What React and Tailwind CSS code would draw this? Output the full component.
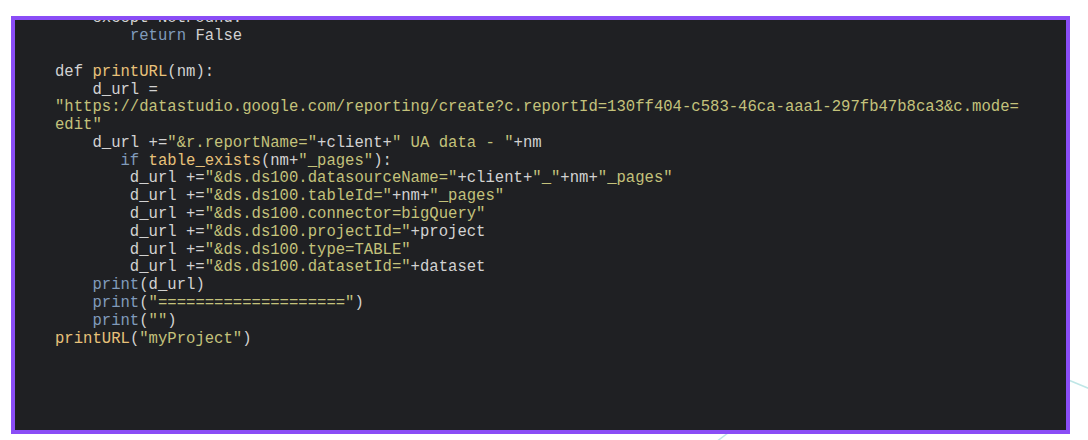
import React from "react";

const P = "text-[#d2d2d2]";
const K = "text-[#809bbb]";
const F = "text-[#e8c27a]";
const S = "text-[#c4c27b]";

const lines = [
  [[P, "    except NotFound:"]],
  [[P, "        "], [K, "return"], [P, " False"]],
  [[P, ""]],
  [[P, "def "], [F, "printURL"], [P, "(nm):"]],
  [[P, "    d_url ="]],
  [[S, "\"https://datastudio.google.com/reporting/create?c.reportId=130ff404-c583-46ca-aaa1-297fb47b8ca3&c.mode="]],
  [[S, "edit\""]],
  [[P, "    d_url +="], [S, "\"&r.reportName=\""], [P, "+client+"], [S, "\" UA data - \""], [P, "+nm"]],
  [[P, "       "], [K, "if"], [P, " "], [F, "table_exists"], [P, "(nm+"], [S, "\"_pages\""], [P, "):"]],
  [[P, "        d_url +="], [S, "\"&ds.ds100.datasourceName=\""], [P, "+client+"], [S, "\"_\""], [P, "+nm+"], [S, "\"_pages\""]],
  [[P, "        d_url +="], [S, "\"&ds.ds100.tableId=\""], [P, "+nm+"], [S, "\"_pages\""]],
  [[P, "        d_url +="], [S, "\"&ds.ds100.connector=bigQuery\""]],
  [[P, "        d_url +="], [S, "\"&ds.ds100.projectId=\""], [P, "+project"]],
  [[P, "        d_url +="], [S, "\"&ds.ds100.type=TABLE\""]],
  [[P, "        d_url +="], [S, "\"&ds.ds100.datasetId=\""], [P, "+dataset"]],
  [[P, "    "], [K, "print"], [P, "(d_url)"]],
  [[P, "    "], [K, "print"], [P, "("], [S, "\"====================\""], [P, ")"]],
  [[P, "    "], [K, "print"], [P, "("], [S, "\"\""], [P, ")"]],
  [[F, "printURL"], [P, "("], [S, "\"myProject\""], [P, ")"]],
];

export default function App() {
  return (
    <div className="relative w-[1088px] h-[440px] bg-white overflow-hidden">
      <svg className="absolute inset-0" width="1088" height="440" viewBox="0 0 1088 440">
        <line x1="1066" y1="379" x2="1090" y2="389" stroke="#bfe6e6" strokeWidth="1.5" />
        <line x1="716" y1="442" x2="732" y2="430" stroke="#bfe6e6" strokeWidth="1.5" />
      </svg>
      <div className="relative pt-[16px] pl-[11px]">
        <div className="w-[1059px] h-[418px] border-4 border-[#8a4df6] bg-[#1f2023] overflow-hidden">
          <div
            className="-mt-[9.7px] pl-[40px] text-[15.6px] leading-[17.8px] whitespace-pre"
            style={{ fontFamily: '"Liberation Mono", "Courier New", monospace' }}
          >
            {lines.map((segs, i) => (
              <div key={i} className="h-[17.8px]">
                {segs.map(([c, t], j) => (
                  <span key={j} className={c}>{t}</span>
                ))}
              </div>
            ))}
          </div>
        </div>
      </div>
    </div>
  );
}
